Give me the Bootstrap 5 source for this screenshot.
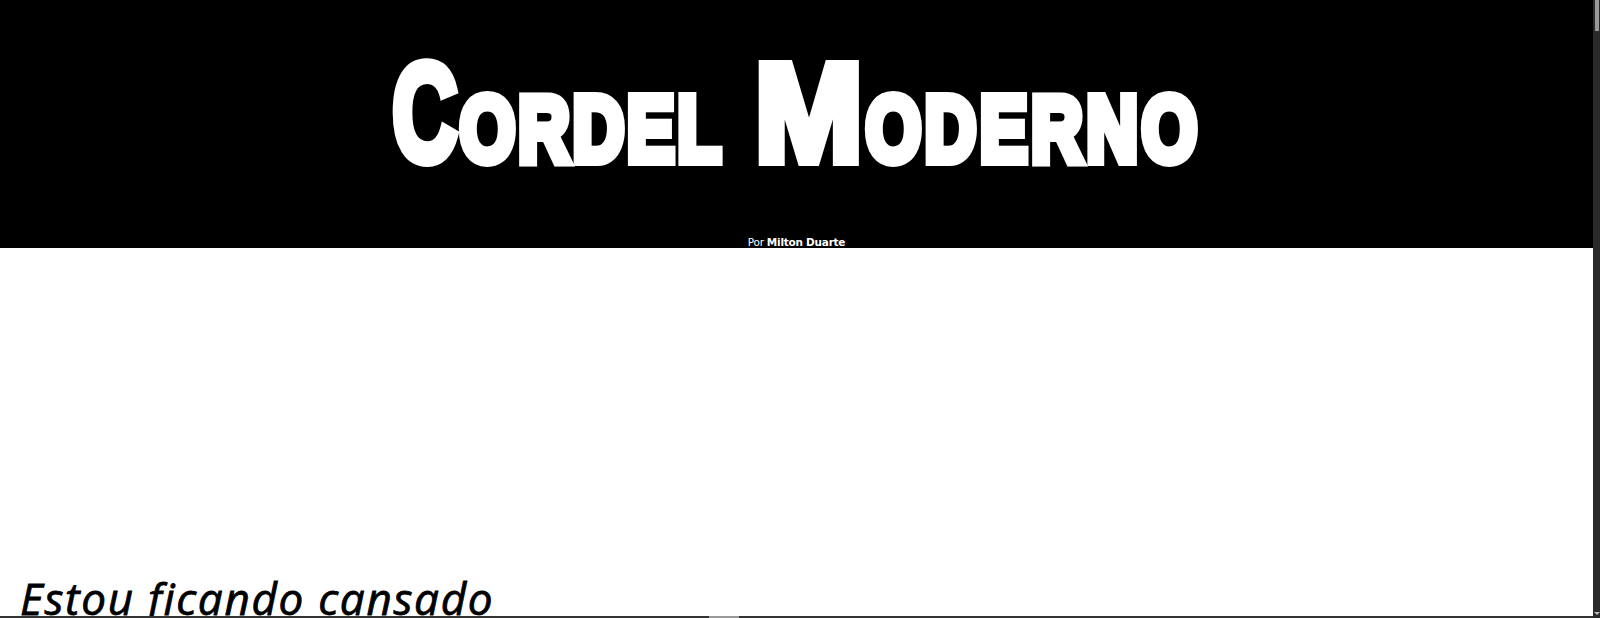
<!DOCTYPE html>
<html lang="pt">
<head>
<meta charset="utf-8">
<title>Cordel Moderno</title>
<link href="https://cdn.jsdelivr.net/npm/bootstrap@5.3.0/dist/css/bootstrap.min.css" rel="stylesheet">
<style>
html, body { height: 618px; overflow: hidden; background: #fff; }
.page-main { width: 1593px; height: 616px; overflow: hidden; }
.site-head { height: 248px; background: #000; color: #fff; }
.site-title { font-family: "Liberation Sans", sans-serif; font-weight: 700; font-size: 93px; line-height: 1; letter-spacing: 4px; word-spacing: 12px; color: #fff; -webkit-text-stroke: 10px #fff; margin: 43px 0 0; white-space: nowrap; transform: scaleX(.765); }
.site-title .cap-big { display: inline-block; font-size: 139px; transform-origin: left center; }
.site-title .cap-c { transform: scaleX(.85); margin-right: -16px; }
.site-title .cap-m { transform: scaleX(1.22); margin-right: 25px; }
.site-title .word-tail { letter-spacing: 5px; }
.byline { font-family: "DejaVu Sans", sans-serif; font-size: 10.5px; letter-spacing: -.25px; line-height: 11px; color: #fff; }
.post-area { height: 368px; padding-top: 320px; }
.post-title { font-family: "Open Sans", sans-serif; font-style: italic; font-weight: 500; font-size: 44px; letter-spacing: 1.7px; line-height: 60px; color: #000; margin: 0 0 0 20px; -webkit-text-stroke: .8px #000; white-space: nowrap; }
.v-rail { width: 7px; height: 618px; background: #2a2a2a; }
.v-thumb { width: 4px; height: 31px; margin-left: 2px; background: #9a9a9a; }
.v-arrow { width: 0; height: 0; margin: 0 0 3px 1px; border-left: 3px solid transparent; border-right: 3px solid transparent; border-top: 3px solid #bdbdbd; }
.h-rail { height: 2px; width: 1593px; background: #333; }
.h-thumb { width: 30px; height: 2px; margin-left: 709px; background: #999; }
</style>
</head>
<body>
<div class="d-flex">
  <div class="flex-grow-0">
    <div class="page-main">
      <header class="site-head d-flex flex-column align-items-center justify-content-between">
        <h1 class="site-title"><span class="cap-big cap-c">C</span>ORDEL <span class="cap-big cap-m">M</span><span class="word-tail">ODERNO</span></h1>
        <div class="byline">Por <strong>Milton Duarte</strong></div>
      </header>
      <main class="post-area">
        <h2 class="post-title">Estou ficando cansado</h2>
      </main>
    </div>
    <div class="h-rail"><div class="h-thumb"></div></div>
  </div>
  <div class="v-rail d-flex flex-column justify-content-between">
    <div class="v-thumb"></div>
    <div class="v-arrow"></div>
  </div>
</div>
<script src="https://cdn.jsdelivr.net/npm/bootstrap@5.3.0/dist/js/bootstrap.bundle.min.js"></script>
</body>
</html>
